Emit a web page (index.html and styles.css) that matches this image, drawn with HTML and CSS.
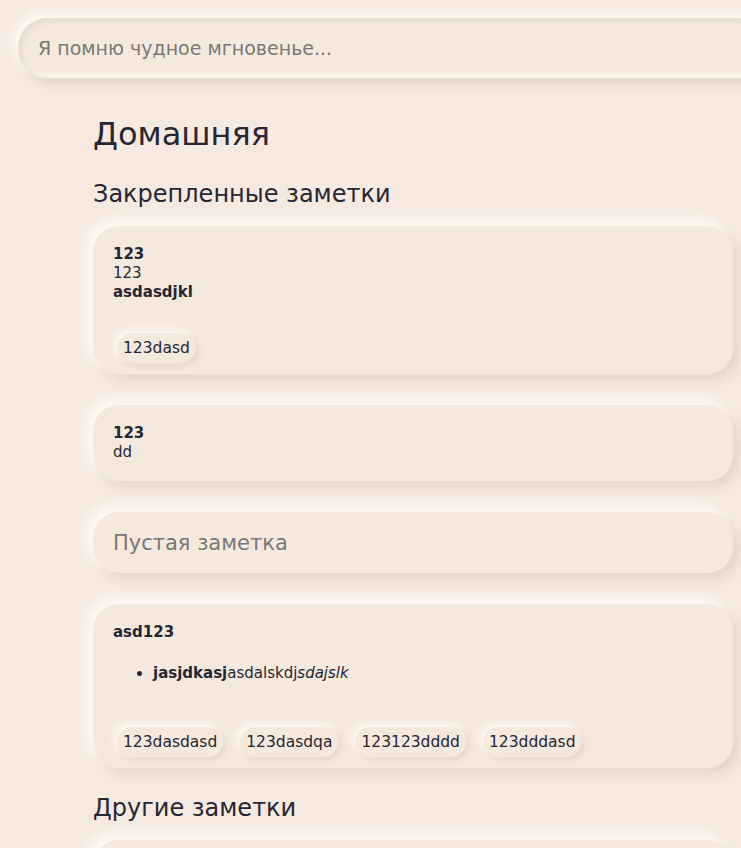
FILE: index.html
```html
<!DOCTYPE html>
<html lang="ru">
<head>
<meta charset="utf-8">
<link rel="stylesheet" href="styles.css">
</head>
<body>
<header class="top">
  <div class="search">
    <input class="search-input" type="text" placeholder="Я помню чудное мгновенье...">
  </div>
</header>
<main class="page">
  <h1 class="title">Домашняя</h1>
  <h2 class="section">Закрепленные заметки</h2>
  <div class="notes">
    <article class="note">
      <div class="note-title">123</div>
      <div class="note-body">
        <p class="para">123<br><strong>asdasdjkl</strong></p>
      </div>
      <div class="tags">
        <span class="tag">123dasd</span>
      </div>
    </article>
    <article class="note">
      <div class="note-title">123</div>
      <div class="note-body">
        <p class="para">dd</p>
      </div>
    </article>
    <article class="note note-empty">
      <div class="placeholder">Пустая заметка</div>
    </article>
    <article class="note">
      <div class="note-title">asd123</div>
      <div class="note-body">
        <ul class="list">
          <li><strong>jasjdkasj</strong>asdalskdj<em>sdajslk</em></li>
        </ul>
      </div>
      <div class="tags">
        <span class="tag">123dasdasd</span>
        <span class="tag">123dasdqa</span>
        <span class="tag">123123dddd</span>
        <span class="tag">123dddasd</span>
      </div>
    </article>
  </div>
  <h2 class="section">Другие заметки</h2>
  <div class="notes">
    <article class="note note-empty">
      <div class="placeholder">Пустая заметка</div>
    </article>
  </div>
</main>
</body>
</html>
```
FILE: styles.css
```css
html, body {
  margin: 0;
  padding: 0;
  background: #f6eae0;
  overflow: hidden;
}
body {
  font-family: "DejaVu Sans", "Noto Sans", sans-serif;
  color: #272632;
  width: 741px;
  height: 848px;
}
.top {
  padding: 18px 0 0 18px;
}
.search {
  width: 760px;
  height: 60px;
  border-radius: 30px;
  background: #f5e9de;
  box-shadow: -5px -5px 10px #fffaf4, 5px 6px 10px #e2d3c7, inset 3px 3px 6px #e6d8cc, inset -3px -3px 6px #fff9f2;
  display: flex;
  align-items: center;
}
.search-input {
  border: none;
  background: transparent;
  outline: none;
  font-family: inherit;
  font-size: 19px;
  color: #272632;
  padding: 0 0 0 20px;
  width: 600px;
}
.search-input::placeholder {
  color: #7a7775;
}
.page {
  margin-left: 93px;
  width: 640px;
}
.title {
  margin: 36px 0 0;
  font-size: 32px;
  font-weight: 400;
  line-height: 40px;
}
.section {
  margin: 24px 0 0;
  font-size: 24px;
  font-weight: 400;
  line-height: 32px;
}
.notes {
  display: flex;
  flex-direction: column;
  gap: 31px;
  margin-top: 16px;
}
.note {
  display: flex;
  flex-direction: column;
  align-items: flex-start;
  background: #f5e9de;
  border-radius: 26px;
  padding: 18px 20px 11px;
  box-shadow: -6px -6px 12px #fffaf4, 6px 6px 12px #e3d4c8;
}
.note-title {
  font-size: 15px;
  font-weight: 700;
  line-height: 20px;
}
.note-body {
  font-size: 15px;
  line-height: 19px;
}
.para {
  margin: 0 0 8px;
}
.para strong {
  font-weight: 700;
}
.list {
  margin: 22px 0 21px;
  padding-left: 40px;
}
.list strong {
  font-weight: 700;
}
.tags {
  display: flex;
  gap: 17px;
  margin-top: 23px;
  padding-left: 4px;
}
.tag {
  font-size: 15.5px;
  line-height: 30px;
  padding: 0 6px;
  border-radius: 15px;
  background: #f5e9de;
  box-shadow: -3px -3px 6px #fffaf4, 3px 3px 6px #e3d4c8;
}
.note-empty {
  padding: 18px 20px 17px;
}
.placeholder {
  font-size: 21px;
  line-height: 26px;
  color: #7a7775;
}
```
